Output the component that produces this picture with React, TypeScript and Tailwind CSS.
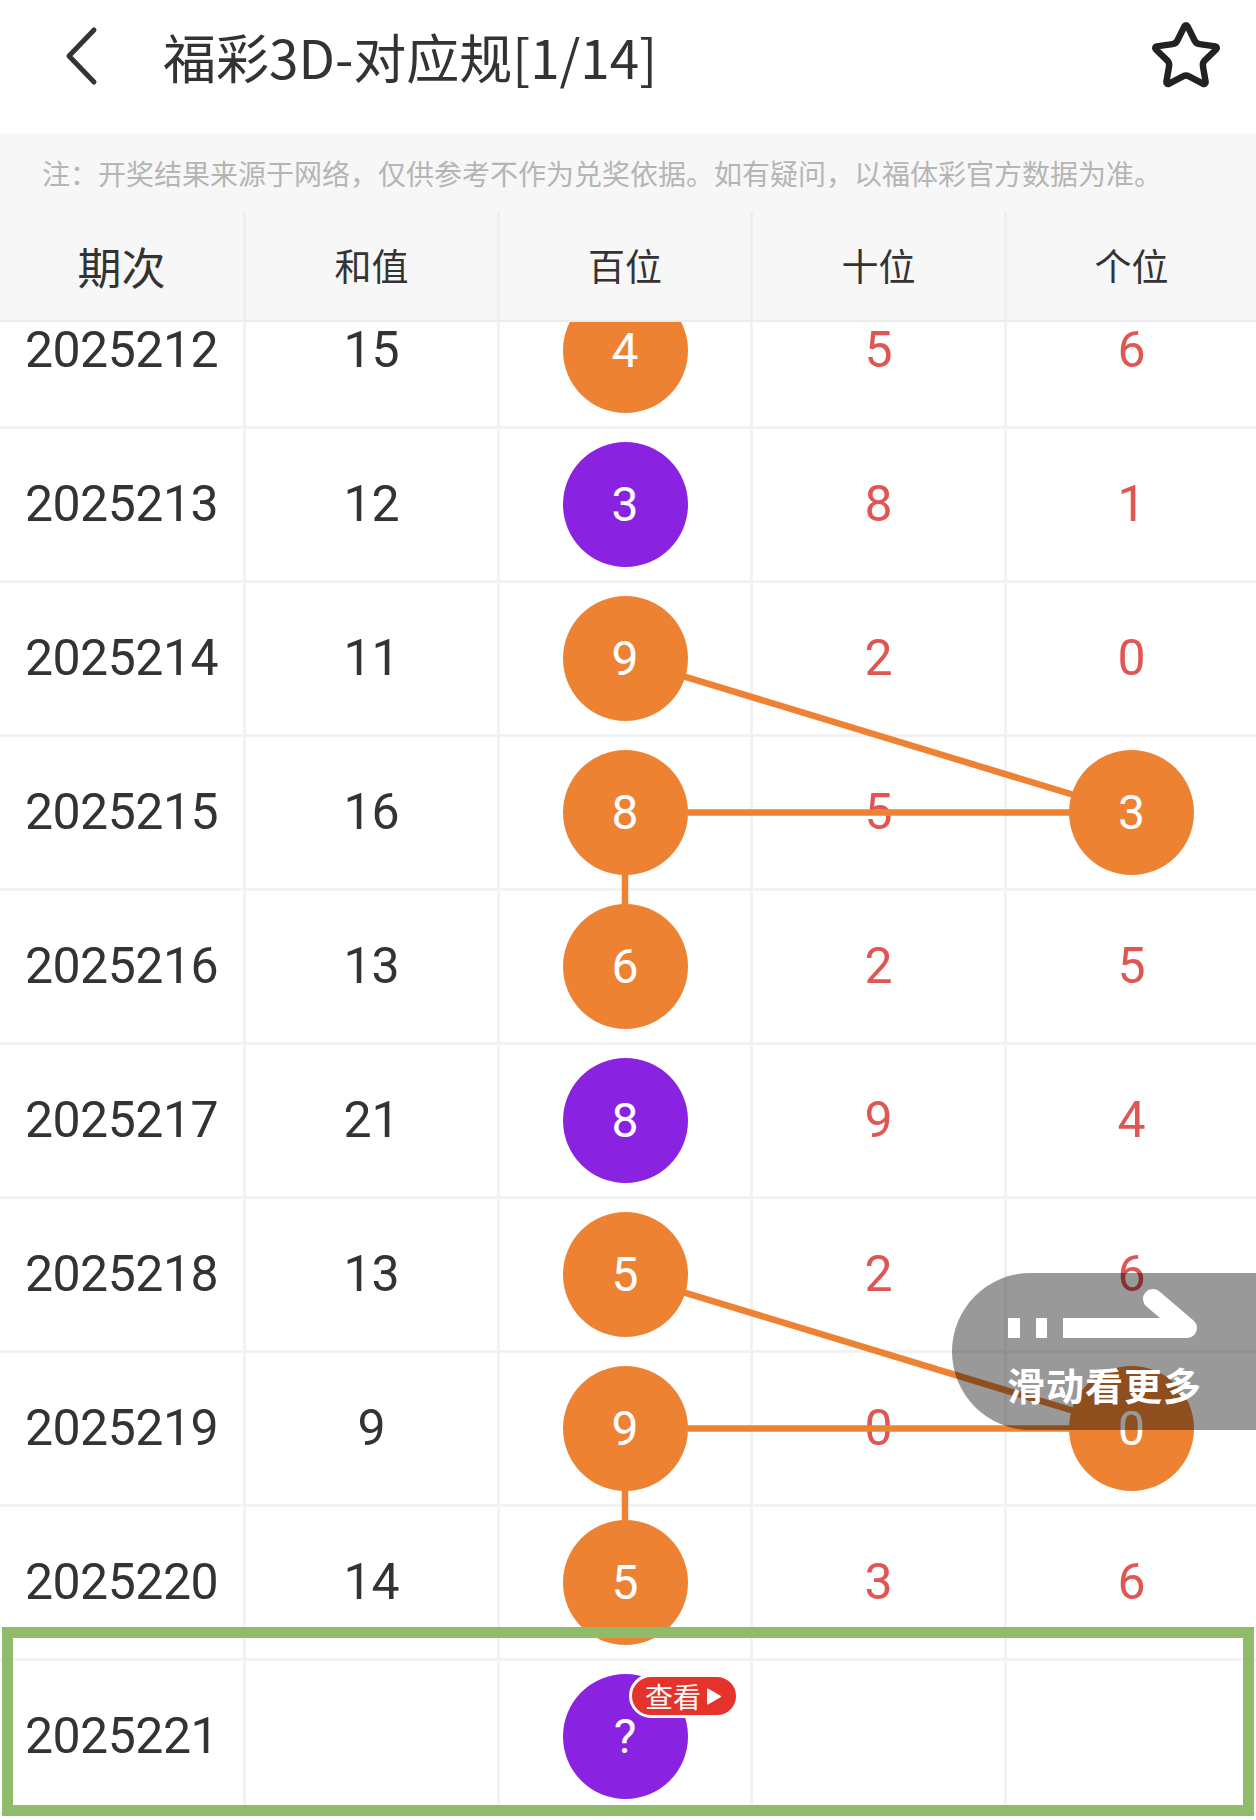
import React from "react";

type Row = {
  issue: string;
  sum: string;
  bai: string;
  baiColor: "o" | "p";
  shi: string;
  ge: string;
  geBall?: boolean;
  pending?: boolean;
};

const rows: Row[] = [
  { issue: "2025212", sum: "15", bai: "4", baiColor: "o", shi: "5", ge: "6" },
  { issue: "2025213", sum: "12", bai: "3", baiColor: "p", shi: "8", ge: "1" },
  { issue: "2025214", sum: "11", bai: "9", baiColor: "o", shi: "2", ge: "0" },
  { issue: "2025215", sum: "16", bai: "8", baiColor: "o", shi: "5", ge: "3", geBall: true },
  { issue: "2025216", sum: "13", bai: "6", baiColor: "o", shi: "2", ge: "5" },
  { issue: "2025217", sum: "21", bai: "8", baiColor: "p", shi: "9", ge: "4" },
  { issue: "2025218", sum: "13", bai: "5", baiColor: "o", shi: "2", ge: "6" },
  { issue: "2025219", sum: "9", bai: "9", baiColor: "o", shi: "0", ge: "0", geBall: true },
  { issue: "2025220", sum: "14", bai: "5", baiColor: "o", shi: "3", ge: "6" },
  { issue: "2025221", sum: "", bai: "?", baiColor: "p", shi: "", ge: "", pending: true },
];

const ROW_H = 154;
const BAI_X = 625;
const GE_X = 1131.5;
const cy = (i: number) => i * ROW_H + 75.5;

const lines: [number, number, number, number][] = [
  [BAI_X, cy(2), GE_X, cy(3)],
  [BAI_X, cy(3), GE_X, cy(3)],
  [BAI_X, cy(3), BAI_X, cy(4)],
  [BAI_X, cy(6), GE_X, cy(7)],
  [BAI_X, cy(7), GE_X, cy(7)],
  [BAI_X, cy(7), BAI_X, cy(8)],
];

const numFont = { fontFamily: '"Roboto", "Noto Sans CJK SC", sans-serif' };

function Ball({ value, color, badge }: { value: string; color: "o" | "p"; badge?: boolean }) {
  return (
    <div
      className={`relative z-10 w-[125px] h-[125px] rounded-full flex items-center justify-center text-white text-[48px] leading-none ${
        color === "o" ? "bg-[#ee8233]" : "bg-[#8a22e2]"
      }`}
      style={numFont}
    >
      {value}
      {badge && (
        <div className="absolute left-[66px] top-0 w-[110px] h-[44px] rounded-full bg-[#e5322a] border-[3px] border-white flex items-center justify-center gap-[5px]">
          <span
            className="text-white text-[28px] leading-none"
            style={{ fontFamily: '"Noto Sans CJK SC", sans-serif' }}
          >
            查看
          </span>
          <svg width="16" height="17" viewBox="0 0 16 17">
            <path d="M2 1.5 L14 8.5 L2 15.5 Z" fill="white" stroke="white" strokeWidth="2" strokeLinejoin="round" />
          </svg>
        </div>
      )}
    </div>
  );
}

export default function App() {
  const cjk = { fontFamily: '"Noto Sans CJK SC", sans-serif' };
  return (
    <div className="relative w-[1256px] h-[1820px] bg-white overflow-hidden text-[#333333]" style={cjk}>
      {/* Top bar */}
      <div className="h-[133px] pb-[21px] flex items-center relative">
        <svg className="ml-[60px]" width="42" height="64" viewBox="0 0 42 64">
          <polyline
            points="34,6 9,32 34,58"
            fill="none"
            stroke="#333"
            strokeWidth="5"
            strokeLinecap="round"
            strokeLinejoin="round"
          />
        </svg>
        <div className="ml-[61px] text-[53px] leading-none text-[#333]">福彩3D-对应规[1/14]</div>
        <svg
          className="ml-auto mr-[33px]"
          width="74"
          height="74"
          viewBox="0 0 24 24"
          fill="none"
          stroke="#222"
          strokeWidth="2.1"
          strokeLinecap="round"
          strokeLinejoin="round"
        >
          <path d="M11.525 2.295a.53.53 0 0 1 .95 0l2.31 4.679a2.123 2.123 0 0 0 1.595 1.16l5.166.756a.53.53 0 0 1 .294.904l-3.736 3.638a2.123 2.123 0 0 0-.611 1.878l.882 5.14a.53.53 0 0 1-.771.56l-4.618-2.428a2.122 2.122 0 0 0-1.973 0L6.396 21.01a.53.53 0 0 1-.77-.56l.881-5.139a2.122 2.122 0 0 0-.611-1.879L2.16 9.795a.53.53 0 0 1 .294-.906l5.165-.755a2.122 2.122 0 0 0 1.597-1.16z" />
        </svg>
      </div>

      {/* Notice */}
      <div className="h-[79px] bg-[#f7f7f7] pl-[42px] flex items-center text-[28px] text-[#b5b5b5] leading-none">
        注：开奖结果来源于网络，仅供参考不作为兑奖依据。如有疑问，以福体彩官方数据为准。
      </div>

      {/* Table header */}
      <div className="grid grid-cols-[246px_254px_253px_254px_1fr] h-[110px] bg-[#f7f7f7] border-b-[2px] border-[#ececec]">
        <div className="flex items-center justify-center border-r-[3px] border-[#eeeeee] text-[44px] text-[#333]">期次</div>
        <div className="flex items-center justify-center border-r-[3px] border-[#eeeeee] text-[37px] text-[#333]">和值</div>
        <div className="flex items-center justify-center border-r-[3px] border-[#eeeeee] text-[37px] text-[#333]">百位</div>
        <div className="flex items-center justify-center border-r-[3px] border-[#eeeeee] text-[37px] text-[#333]">十位</div>
        <div className="flex items-center justify-center text-[37px] text-[#333]">个位</div>
      </div>

      {/* Table body */}
      <div className="relative h-[1496px] overflow-hidden">
        <div className="relative -mt-[47px]">
          {rows.map((r) => (
            <div
              key={r.issue}
              className="grid grid-cols-[246px_254px_253px_254px_1fr] h-[154px] border-b-[3px] border-[#f2f2f2]"
            >
              <div
                className="flex items-center justify-center border-r-[3px] border-[#f2f2f2] text-[50px] text-[#333] tracking-[-0.5px]"
                style={numFont}
              >
                {r.issue}
              </div>
              <div
                className="flex items-center justify-center border-r-[3px] border-[#f2f2f2] text-[50px] text-[#333]"
                style={numFont}
              >
                {r.sum}
              </div>
              <div className="flex items-center justify-center border-r-[3px] border-[#f2f2f2]">
                <Ball value={r.bai} color={r.baiColor} badge={r.pending} />
              </div>
              <div
                className="flex items-center justify-center border-r-[3px] border-[#f2f2f2] text-[50px] text-[#e05652]"
                style={numFont}
              >
                {r.shi}
              </div>
              <div className="flex items-center justify-center text-[50px] text-[#e05652]" style={numFont}>
                {r.geBall ? <Ball value={r.ge} color="o" /> : r.ge}
              </div>
            </div>
          ))}
          <svg className="absolute left-0 top-0 pointer-events-none" width="1256" height="1540">
            {lines.map(([x1, y1, x2, y2], i) => (
              <line key={i} x1={x1} y1={y1} x2={x2} y2={y2} stroke="#ee8233" strokeWidth="6.5" />
            ))}
          </svg>
        </div>
      </div>

      {/* Highlight box */}
      <div className="absolute z-20 left-[2px] top-[1627px] w-[1252px] h-[189px] border-[11px] border-[#8fbc6a] pointer-events-none" />

      {/* Swipe hint */}
      <div className="absolute z-30 left-[952px] top-[1273px] w-[304px] h-[157px] rounded-l-full bg-black/40 flex flex-col pl-[55px] pt-[14px]">
        <svg width="200" height="56" viewBox="0 0 200 56">
          <rect x="1" y="31" width="12" height="20" fill="white" />
          <rect x="29" y="31" width="11" height="20" fill="white" />
          <rect x="56" y="31" width="124" height="20" fill="white" />
          <line x1="146" y1="12" x2="180" y2="41" stroke="white" strokeWidth="20" strokeLinecap="round" />
        </svg>
        <div className="mt-[20px] text-[38px] leading-[42px] font-bold text-white tracking-[1px]">滑动看更多</div>
      </div>
    </div>
  );
}
